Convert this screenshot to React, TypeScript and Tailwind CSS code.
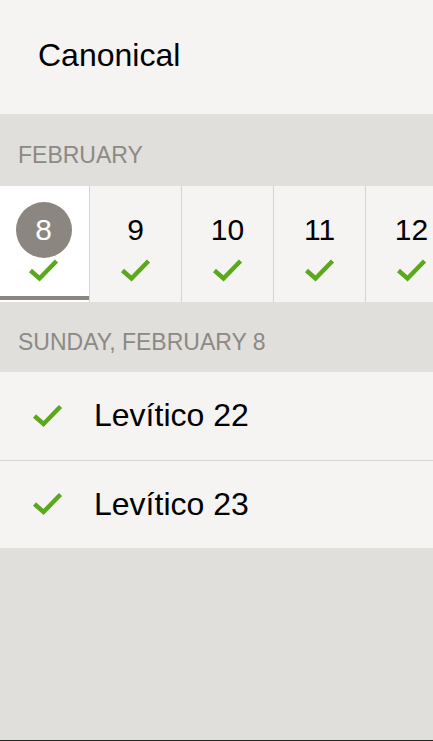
import React from 'react';

const days = [8, 9, 10, 11, 12];
const readings = ['Levítico 22', 'Levítico 23'];

function Check({ className }: { className?: string }) {
  return (
    <svg viewBox="0 0 31 24" className={className} fill="none">
      <polyline
        points="2.5,12.5 11.5,20.5 28.5,3"
        stroke="#5aa81c"
        strokeWidth={4.5}
        strokeLinejoin="miter"
        strokeLinecap="butt"
      />
    </svg>
  );
}

export default function App() {
  const selected = 8;

  return (
    <div
      className="flex h-[741px] w-full flex-col overflow-hidden border-b border-[#222] bg-[#e0dfdb]"
      style={{ fontFamily: '"Liberation Sans", Arial, sans-serif' }}
    >
      {/* Title bar */}
      <div className="h-[114px] shrink-0 bg-[#f5f4f2] pl-[38px] pt-[39px]">
        <h1 className="text-[32px] leading-[32px] text-black">Canonical</h1>
      </div>

      {/* Month heading */}
      <div className="h-[72px] shrink-0 pl-[18px] pt-[30px]">
        <p className="text-[23px] leading-[23px] text-[#8d8984]">FEBRUARY</p>
      </div>

      {/* Day strip */}
      <div className="flex h-[116px] shrink-0 overflow-hidden bg-[#f5f4f2]">
        <div className="-ml-[2px] flex">
          {days.map((day) => {
            const active = day === selected;
            return (
              <div
                key={day}
                className={`flex w-[92px] shrink-0 flex-col items-center border-r border-[#d6d4d0] pt-[16px] ${
                  active ? 'bg-white' : 'bg-[#f5f4f2]'
                }`}
              >
                <div
                  className={`flex h-[56px] items-center justify-center text-[30px] leading-none ${
                    active ? 'w-[56px] rounded-full bg-[#8b8680] text-white' : 'text-black'
                  }`}
                >
                  {day}
                </div>
                <Check className="h-[24px] w-[31px]" />
                <div className="mt-auto mb-[2px] h-[4px] w-full">
                  {active && <div className="ml-[2px] h-full bg-[#8b8680]" />}
                </div>
              </div>
            );
          })}
        </div>
      </div>

      {/* Day heading */}
      <div className="h-[70px] shrink-0 pl-[18px] pt-[29px]">
        <p className="text-[23px] leading-[23px] text-[#8d8984]">SUNDAY, FEBRUARY 8</p>
      </div>

      {/* Readings */}
      <ul className="shrink-0 bg-[#f5f4f2]">
        {readings.map((reading, i) => (
          <li
            key={reading}
            className={`flex items-center pb-[2px] ${
              i < readings.length - 1 ? 'h-[89px] border-b border-[#d6d4d0]' : 'h-[87px]'
            }`}
          >
            <Check className="ml-[32px] h-[25px] w-[31px]" />
            <span className="ml-[31px] text-[32px] leading-[32px] text-black">{reading}</span>
          </li>
        ))}
      </ul>
    </div>
  );
}
